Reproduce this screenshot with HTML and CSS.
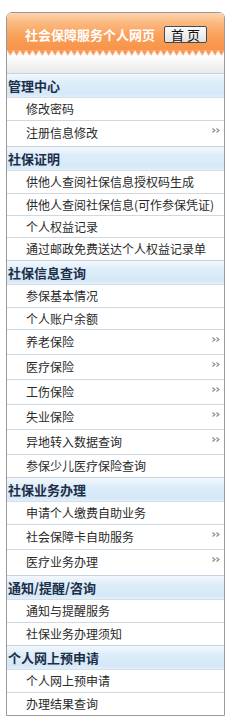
FILE: index.html
```html
<!DOCTYPE html>
<html lang="zh-CN">
<head>
  <meta charset="UTF-8">
  <title>社会保障服务个人网页</title>
  <link rel="stylesheet" href="styles.css">
</head>
<body>

<div class="panel">
  <div class="panel-title">
    <div class="title-row">
      <span class="title-text">社会保障服务个人网页</span>
      <a class="home-btn" href="#">首 页</a>
    </div>
    <svg class="zigzag" width="217" height="6" viewBox="0 0 217 6" preserveAspectRatio="none">
      <defs>
        <pattern id="teeth" width="6.4" height="6" patternUnits="userSpaceOnUse">
          <path d="M0 0 H6.4 L3.2 5.5 Z" fill="#f8964d" stroke="#fbb889" stroke-width="0.6"/>
        </pattern>
      </defs>
      <rect width="217" height="6" fill="url(#teeth)"/>
    </svg>
    <div class="title-fade"></div>
  </div>

  <div class="menu-group">
    <div class="group-head">管理中心</div>
    <ul>
      <li><a href="#">修改密码</a></li>
      <li class="more"><a href="#">注册信息修改</a></li>
    </ul>
  </div>

  <div class="menu-group">
    <div class="group-head">社保证明</div>
    <ul>
      <li><a href="#">供他人查阅社保信息授权码生成</a></li>
      <li><a href="#">供他人查阅社保信息(可作参保凭证)</a></li>
      <li><a href="#">个人权益记录</a></li>
      <li><a href="#">通过邮政免费送达个人权益记录单</a></li>
    </ul>
  </div>

  <div class="menu-group">
    <div class="group-head">社保信息查询</div>
    <ul>
      <li><a href="#">参保基本情况</a></li>
      <li><a href="#">个人账户余额</a></li>
      <li class="more"><a href="#">养老保险</a></li>
      <li class="more"><a href="#">医疗保险</a></li>
      <li class="more"><a href="#">工伤保险</a></li>
      <li class="more"><a href="#">失业保险</a></li>
      <li class="more"><a href="#">异地转入数据查询</a></li>
      <li><a href="#">参保少儿医疗保险查询</a></li>
    </ul>
  </div>

  <div class="menu-group">
    <div class="group-head">社保业务办理</div>
    <ul>
      <li><a href="#">申请个人缴费自助业务</a></li>
      <li class="more"><a href="#">社会保障卡自助服务</a></li>
      <li class="more"><a href="#">医疗业务办理</a></li>
    </ul>
  </div>

  <div class="menu-group">
    <div class="group-head">通知/提醒/咨询</div>
    <ul>
      <li><a href="#">通知与提醒服务</a></li>
      <li><a href="#">社保业务办理须知</a></li>
    </ul>
  </div>

  <div class="menu-group">
    <div class="group-head">个人网上预申请</div>
    <ul>
      <li><a href="#">个人网上预申请</a></li>
      <li><a href="#">办理结果查询</a></li>
    </ul>
  </div>
</div>

</body>
</html>
```

FILE: styles.css
```css
body {
  margin: 0;
  padding: 0;
  background: #fff;
  font-family: "Noto Sans CJK SC", "Liberation Sans", sans-serif;
}
.panel {
  box-sizing: border-box;
  width: 219px;
  margin: 12px 0 0 6px;
  border: 1px solid #9a9a9a;
  border-radius: 6px 6px 0 0;
  overflow: hidden;
}
.panel-title {
  background: #fff;
}
.title-row {
  height: 37px;
  box-sizing: border-box;
  padding: 6px 0 0 18px;
  display: flex;
  align-items: center;
  background: linear-gradient(#fdd4ab 0, #fbb67c 30%, #f99e56 65%, #f8934a 100%);
}
.title-text {
  color: #fff;
  font-size: 13px;
  font-weight: bold;
  white-space: nowrap;
}
.home-btn {
  box-sizing: border-box;
  margin-left: 9px;
  width: 43px;
  height: 17px;
  line-height: 15px;
  text-align: center;
  font-size: 13px;
  color: #111;
  text-decoration: none;
  background: linear-gradient(#fcfcfc, #e2e2e2);
  border: 1px solid #4a4a4a;
  border-radius: 2px;
}
.zigzag {
  display: block;
  width: 100%;
  height: 6px;
  background: #fff;
}
.title-fade {
  height: 17px;
  background: linear-gradient(#fff 0, #f6f6f6 40%, #e9e9e9 100%);
}
.group-head {
  box-sizing: border-box;
  height: 25px;
  line-height: 23px;
  padding-left: 1px;
  font-size: 13px;
  font-weight: bold;
  color: #1c2f48;
  border-top: 1px solid #c6d3de;
  border-bottom: 1px solid #d3e0ea;
  background: linear-gradient(#f3f8fd 0, #deedf9 35%, #d5e8f8 85%, #e4eff9 100%);
}
.menu-group ul {
  list-style: none;
  margin: 0;
  padding: 0;
}
.menu-group li {
  position: relative;
  box-sizing: border-box;
  height: 22px;
  line-height: 21px;
  padding-left: 19px;
  border-bottom: 1px solid #d0d9e1;
  font-size: 12px;
}
.menu-group li:first-child {
  height: 23px;
  line-height: 22px;
}
.menu-group li:last-child {
  border-bottom: none;
}
.menu-group li.more {
  height: 25px;
  line-height: 24px;
}
.menu-group li.more::after {
  content: '';
  position: absolute;
  right: 4px;
  top: 7px;
  width: 8px;
  height: 5px;
  background: url("data:image/svg+xml;utf8,<svg xmlns='http://www.w3.org/2000/svg' width='8' height='5'><path d='M0.5 0.5 L3 2.5 L0.5 4.5 M4.5 0.5 L7 2.5 L4.5 4.5' fill='none' stroke='%23888' stroke-width='1.1'/></svg>") no-repeat;
}
.menu-group li a {
  color: #2a2a2a;
  text-decoration: none;
  white-space: nowrap;
}
```
